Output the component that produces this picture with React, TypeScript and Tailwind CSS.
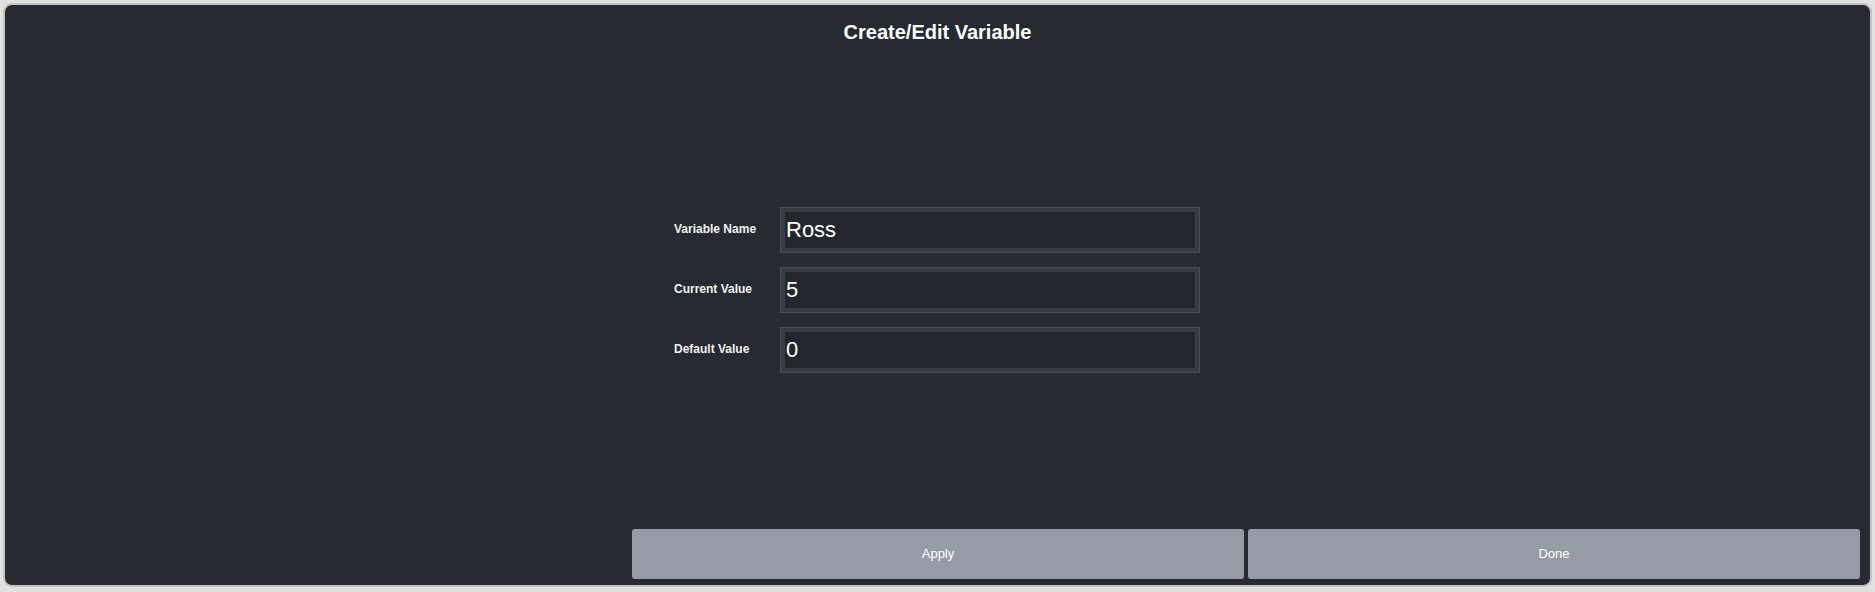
import React from "react";

const font = { fontFamily: '"Liberation Sans", Arial, sans-serif' };

type FieldProps = { label: string; value: string };

function Field({ label, value }: FieldProps) {
  return (
    <div className="flex items-center">
      <div className="w-[106px] -translate-y-px text-[12px] font-bold leading-[14px] text-[#f2f2f2]">{label}</div>
      <div className="h-[46px] w-[420px] border border-[#4a4e54]">
        <div className="flex h-full w-full items-center border-4 border-[#393d43] bg-[#23272d] pl-px text-[22px] leading-[24px] text-white">
          {value}
        </div>
      </div>
    </div>
  );
}

export default function App() {
  return (
    <div className="h-[592px] w-[1875px] bg-[#e1e1e1] px-[3px] pt-[3px]" style={font}>
      <div className="flex h-[584px] flex-col rounded-[9px] border-2 border-[#c3c3c3] bg-[#262a31]">
        <div className="mt-[17px] text-center text-[20px] font-bold leading-[20px] text-white">
          Create/Edit Variable
        </div>

        <div className="mt-[165px] flex flex-col items-center">
          <div className="flex flex-col gap-[14px] pr-[1px]">
            <Field label="Variable Name" value="Ross" />
            <Field label="Current Value" value="5" />
            <Field label="Default Value" value="0" />
          </div>
        </div>

        <div className="flex-1" />

        <div className="mb-[6px] flex justify-end gap-[4px] pr-[10px]">
          <button className="h-[50px] w-[612px] rounded-[3px] bg-[#959ca6] text-[13px] text-white">
            Apply
          </button>
          <button className="h-[50px] w-[612px] rounded-[3px] bg-[#959ca6] text-[13px] text-white">
            Done
          </button>
        </div>
      </div>
    </div>
  );
}
